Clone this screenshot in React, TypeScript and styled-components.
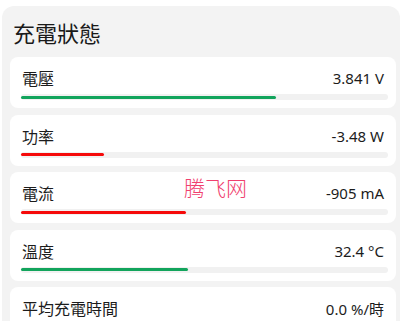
import styled, { createGlobalStyle } from 'styled-components';

const GlobalStyle = createGlobalStyle`
  html, body {
    margin: 0;
    padding: 0;
    background: #ffffff;
    overflow: hidden;
  }
  body {
    font-family: "Noto Sans", "Noto Sans CJK TC", sans-serif;
    color: #1c1c1c;
  }
`;

const Page = styled.div`
  position: relative;
  width: 402px;
  height: 321px;
  overflow: hidden;
  padding: 6px 2px 0 2px;
  box-sizing: border-box;
`;

const Panel = styled.section`
  background: #f3f3f3;
  border-radius: 12px;
  padding: 11px 4px 16px 8px;
  display: flex;
  flex-direction: column;
`;

const Title = styled.h2`
  margin: 0 0 10px 3px;
  font-size: 22px;
  line-height: 30px;
  font-weight: 400;
  color: #1a1a1a;
  font-family: "Noto Sans CJK TC", "Noto Sans", sans-serif;
`;

const List = styled.div`
  display: flex;
  flex-direction: column;
  gap: 6.5px;
`;

const Card = styled.div`
  background: #ffffff;
  border-radius: 8px;
  height: 51px;
  box-sizing: border-box;
  padding: 10px 8px 8px 11px;
  display: flex;
  flex-direction: column;
`;

const Row = styled.div`
  display: flex;
  justify-content: space-between;
  align-items: center;
  height: 22px;
`;

const Label = styled.span`
  margin-left: 1px;
  font-size: 16px;
  font-family: "Noto Sans CJK TC", "Noto Sans", sans-serif;
  color: #1c1c1c;
`;

const Value = styled.span`
  margin-right: 4px;
  font-size: 15px;
  color: #1c1c1c;
  font-family: "Noto Sans", "Noto Sans CJK TC", sans-serif;
`;

const Track = styled.div`
  margin-top: 5px;
  height: 6px;
  border-radius: 3px;
  background: #f1f1f1;
  display: flex;
  align-items: center;
`;

const Fill = styled.div<{ $tone: 'good' | 'bad' }>`
  height: 3px;
  border-radius: 1.5px;
  background: ${({ $tone }) => ($tone === 'good' ? '#12a45c' : '#f50a0a')};
`;

const Watermark = styled.div`
  position: absolute;
  left: 184px;
  top: 173px;
  font-size: 21px;
  line-height: 28px;
  font-weight: 300;
  color: #f0406e;
  font-family: "Noto Sans CJK SC", sans-serif;
  pointer-events: none;
`;

type Stat = {
  label: string;
  value: string;
  percent?: number;
  tone?: 'good' | 'bad';
};

const stats: Stat[] = [
  { label: '電壓', value: '3.841 V', percent: 69.5, tone: 'good' },
  { label: '功率', value: '-3.48 W', percent: 22.6, tone: 'bad' },
  { label: '電流', value: '-905 mA', percent: 45, tone: 'bad' },
  { label: '溫度', value: '32.4 °C', percent: 45.5, tone: 'good' },
  { label: '平均充電時間', value: '0.0 %/時', percent: 0, tone: 'good' },
];

export default function App() {
  return (
    <>
      <GlobalStyle />
      <Page>
        <Panel>
          <Title>充電狀態</Title>
          <List>
            {stats.map((s) => (
              <Card key={s.label}>
                <Row>
                  <Label>{s.label}</Label>
                  <Value>{s.value}</Value>
                </Row>
                <Track>
                  <Fill $tone={s.tone ?? 'good'} style={{ width: `${s.percent ?? 0}%` }} />
                </Track>
              </Card>
            ))}
          </List>
        </Panel>
        <Watermark>腾飞网</Watermark>
      </Page>
    </>
  );
}
